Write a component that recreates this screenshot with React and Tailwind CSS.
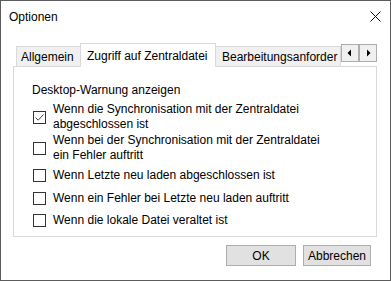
import React from 'react';

const items = [
  { text: ['Wenn die Synchronisation mit der Zentraldatei', 'abgeschlossen ist'], checked: true, mt: 'mt-[4px]' },
  { text: ['Wenn bei der Synchronisation mit der Zentraldatei', 'ein Fehler auftritt'], checked: false, mt: 'mt-[1px]' },
  { text: ['Wenn Letzte neu laden abgeschlossen ist'], checked: false, mt: 'mt-[5px]' },
  { text: ['Wenn ein Fehler bei Letzte neu laden auftritt'], checked: false, mt: 'mt-[8px]' },
  { text: ['Wenn die lokale Datei veraltet ist'], checked: false, mt: 'mt-[7px]' },
];

const CheckRow = ({ text, checked, mt }) => (
  <div className={`flex items-center ${mt}`}>
    <div className="w-[13px] h-[13px] border border-[#333333] bg-white flex items-center justify-center shrink-0">
      {checked && (
        <svg width="11" height="11" viewBox="0 0 11 11">
          <path d="M1.5 5.5 L4.2 8.2 L9.5 2.5" fill="none" stroke="#444" strokeWidth="1" />
        </svg>
      )}
    </div>
    <div className="ml-[7px] leading-[15px]">
      {text.map((t) => (
        <div key={t}>{t}</div>
      ))}
    </div>
  </div>
);

const ArrowBtn = ({ dir }) => (
  <div className="w-[18px] h-[18px] bg-[#f0f0f0] border border-[#adadad] flex items-center justify-center">
    <svg width="6" height="8" viewBox="0 0 6 8">
      {dir === 'left' ? <path d="M4 0.5 L4 7.5 L0.5 4 Z" fill="#000" /> : <path d="M2 0.5 L2 7.5 L5.5 4 Z" fill="#000" />}
    </svg>
  </div>
);

export default function App() {
  return (
    <div
      className="w-[391px] h-[281px] bg-white border border-[#5c5c5c] flex flex-col text-[12px] text-black overflow-hidden"
      style={{ fontFamily: '"Liberation Sans", Arial, sans-serif' }}
    >
      {/* Title bar */}
      <div className="h-[31px] flex items-center justify-between pl-[8px] pr-[9px] shrink-0">
        <span className="text-[12px]">Optionen</span>
        <svg width="11" height="11" viewBox="0 0 11 11">
          <path d="M0.5 0.5 L10.5 10.5 M10.5 0.5 L0.5 10.5" stroke="#111" strokeWidth="1" />
        </svg>
      </div>

      <div className="pl-[12px] pr-[13px] mt-[11px]">
        {/* Tabs */}
        <div className="flex items-end h-[23px] pl-[3px] relative z-10">
          <div className="h-[20px] w-[65px] bg-[#f0f0f0] border border-[#d9d9d9] border-b-0 flex items-center pl-[4px] whitespace-nowrap">
            Allgemein
          </div>
          <div className="h-[24px] w-[136px] bg-white border border-[#d9d9d9] border-b-0 -mb-px -ml-px flex items-start pt-[3px] pl-[6px] whitespace-nowrap">
            Zugriff auf Zentraldatei
          </div>
          <div className="h-[20px] flex-1 min-w-0 overflow-hidden bg-[#f0f0f0] border border-[#d9d9d9] border-b-0 border-l-0 flex items-center pl-[6px] whitespace-nowrap">
            Bearbeitungsanforder
          </div>
          <div className="flex self-start mt-[1px]">
            <ArrowBtn dir="left" />
            <ArrowBtn dir="right" />
          </div>
        </div>

        {/* Panel */}
        <div className="h-[171px] border border-[#d9d9d9] bg-white pt-[16px] pl-[19px]">
          <div className="leading-[15px] -ml-px">Desktop-Warnung anzeigen</div>
          {items.map((it, i) => (
            <CheckRow key={i} {...it} />
          ))}
        </div>

        {/* Buttons */}
        <div className="flex justify-end gap-[7px] mt-[8px] pr-[6px]">
          <button className="w-[70px] h-[21px] bg-[#e1e1e1] border border-[#adadad] text-[12px] leading-none">OK</button>
          <button className="w-[68px] h-[21px] bg-[#e1e1e1] border border-[#adadad] text-[12px] leading-none">Abbrechen</button>
        </div>
      </div>
    </div>
  );
}
